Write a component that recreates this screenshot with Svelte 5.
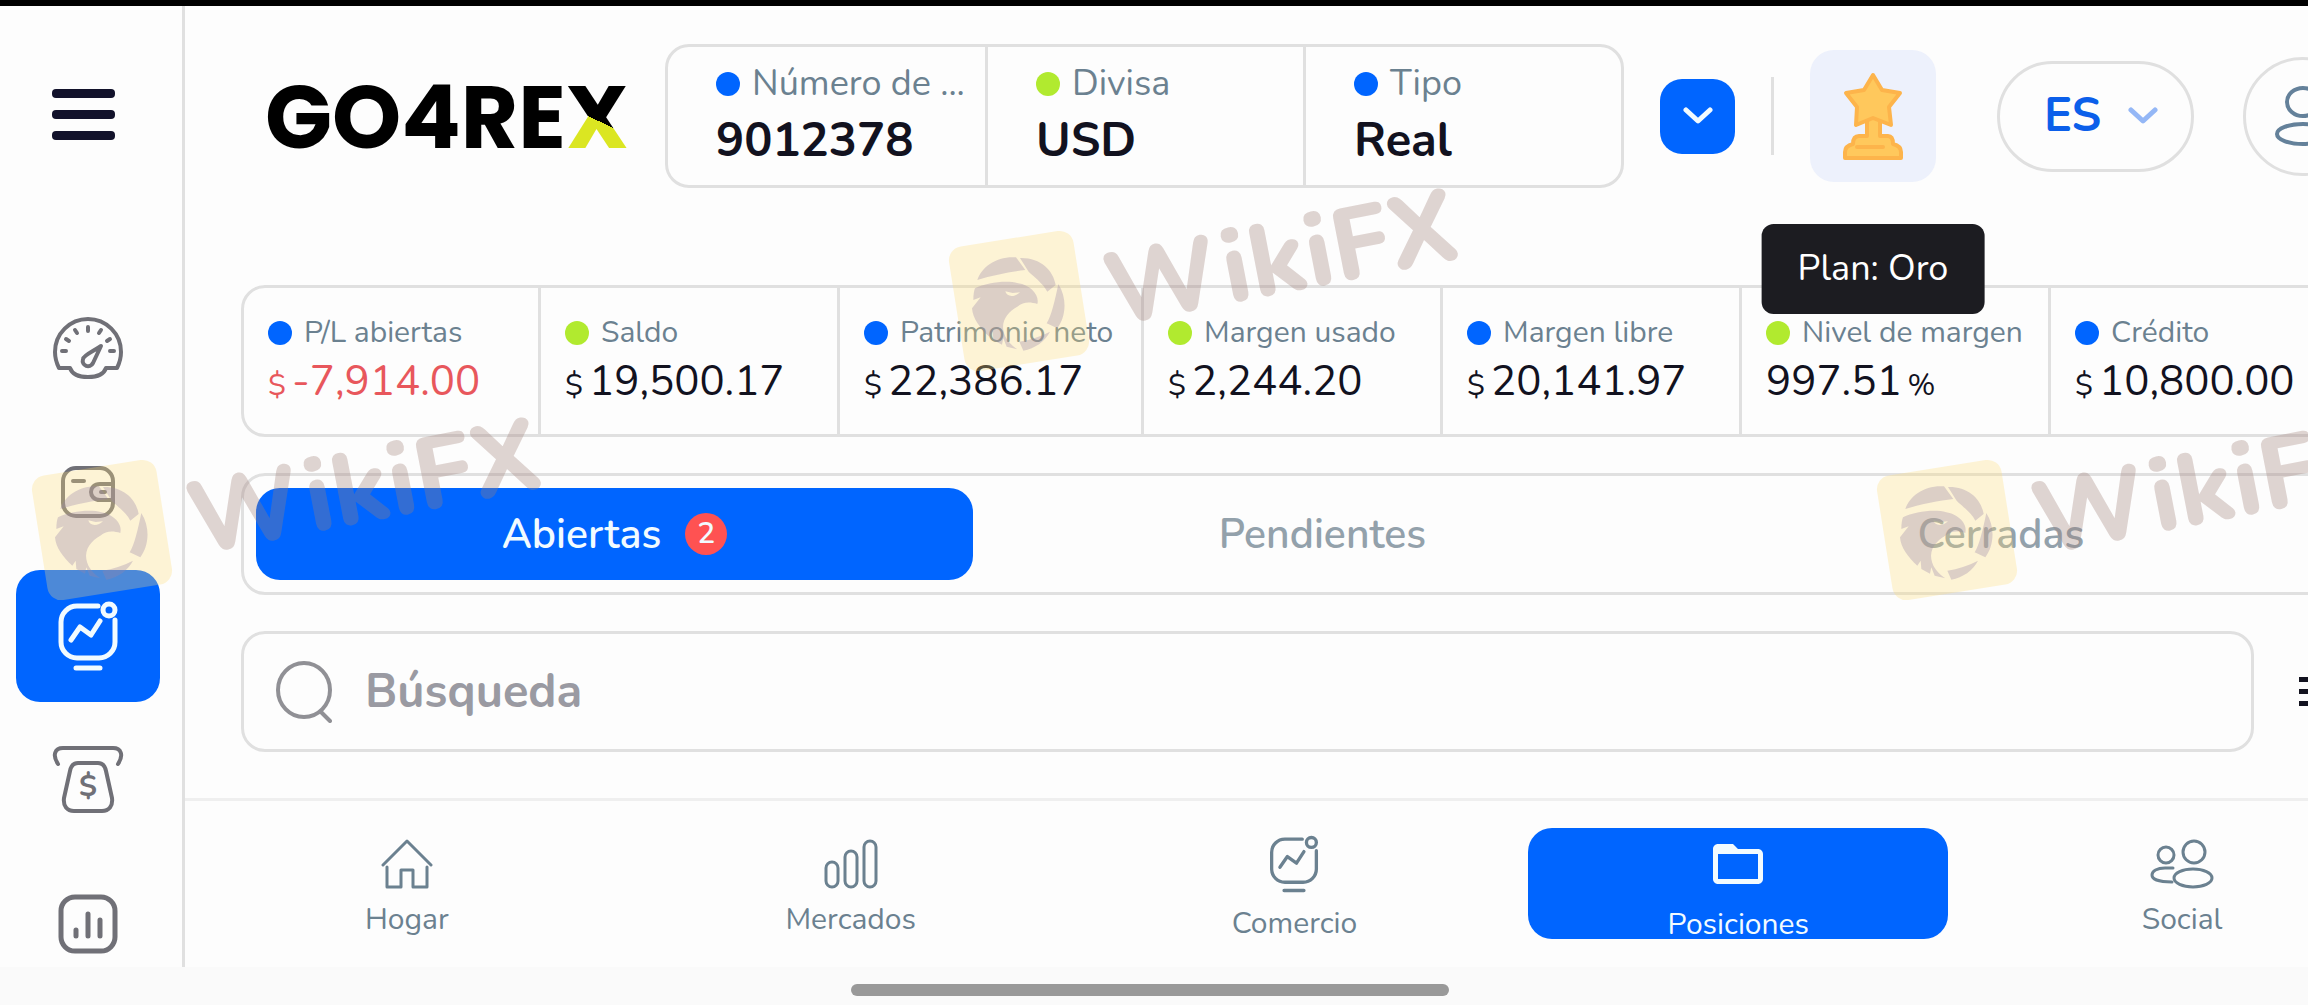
<script>
    const sideLinks = [
        { icon: 'gauge', label: 'Panel' },
        { icon: 'wallet', label: 'Cartera' },
        { icon: 'monitor', label: 'Comercio', active: true },
        { icon: 'cash', label: 'Retirar' },
        { icon: 'chart', label: 'Informes' }
    ];

    const account = [
        { label: 'Número de ...', value: '9012378', color: 'blue' },
        { label: 'Divisa', value: 'USD', color: 'green' },
        { label: 'Tipo', value: 'Real', color: 'blue' }
    ];

    const stats = [
        { label: 'P/L abiertas', value: '-7,914.00', color: 'blue', negative: true },
        { label: 'Saldo', value: '19,500.17', color: 'green' },
        { label: 'Patrimonio neto', value: '22,386.17', color: 'blue' },
        { label: 'Margen usado', value: '2,244.20', color: 'green' },
        { label: 'Margen libre', value: '20,141.97', color: 'blue' },
        { label: 'Nivel de margen', value: '997.51', color: 'green', percent: true },
        { label: 'Crédito', value: '10,800.00', color: 'blue' }
    ];

    const tabs = [
        { id: 'open', label: 'Abiertas', count: 2 },
        { id: 'pending', label: 'Pendientes' },
        { id: 'closed', label: 'Cerradas' }
    ];

    const navLinks = [
        { icon: 'home', label: 'Hogar' },
        { icon: 'bars', label: 'Mercados' },
        { icon: 'monitor', label: 'Comercio' },
        { icon: 'folder', label: 'Posiciones', active: true },
        { icon: 'people', label: 'Social' }
    ];

    const watermarks = [
        { x: 940, y: 180 },
        { x: 23, y: 409 },
        { x: 1868, y: 409 }
    ];

    let currentTab = $state('open');
    let language = $state('ES');
    let search = $state('');
</script>

{#snippet icon(name)}
    {#if name === 'gauge'}
        <svg class="icon" width="70" height="62" viewBox="0 0 70 62" stroke-width="4">
            <path d="M6 51C3 45 2 40 2 35A33 33 0 0 1 68 35C68 40 67 45 64 51H53C51 57 44 60 35 60S19 57 17 51Z" />
            <path d="M9 34h4M13 22l3 2M22 13l2 3M35 10v4M48 13l-2 3M57 22l-3 2M61 34h-4" />
            <path d="M48 29L40 46C37 52 28 49 30 42C31 38 41 34 48 29Z" />
        </svg>
    {:else if name === 'wallet'}
        <svg class="icon" width="54" height="52" viewBox="0 0 54 52" stroke-width="4">
            <rect x="2" y="2" width="50" height="48" rx="13" />
            <path d="M12 15h11M52 18H39C27 18 27 34 39 34H52M40 26h4" />
        </svg>
    {:else if name === 'monitor'}
        <svg class="icon monitor" viewBox="0 0 60 70" stroke-width="5">
            <path d="M40 5H19A16 16 0 0 0 3 21V41A16 16 0 0 0 19 57H41A16 16 0 0 0 57 41V19" />
            <circle cx="51" cy="9" r="6" />
            <path d="M13 39L22 26L33 34L42 20M18 67H42" />
        </svg>
    {:else if name === 'cash'}
        <svg class="icon" width="72" height="68" viewBox="0 0 72 68" stroke-width="4">
            <path d="M6 18C0 9 3 2 11 2H61C69 2 72 9 66 18" />
            <path d="M26 17H46C51 17 53 20 54 25L60 52C61 60 57 65 50 65H22C15 65 11 60 12 52L18 25C19 20 21 17 26 17Z" />
            <text x="36" y="50" text-anchor="middle">$</text>
        </svg>
    {:else if name === 'chart'}
        <svg class="icon" width="60" height="60" viewBox="0 0 60 60" stroke-width="5">
            <rect x="3" y="3" width="54" height="54" rx="14" />
            <path d="M18 36v6M30 20v22M42 26v16" />
        </svg>
    {:else if name === 'home'}
        <svg class="icon" width="52" height="50" viewBox="0 0 52 50" stroke-width="3">
            <path d="M2 26L26 2L50 26" />
            <path d="M6 28V48H20V31H32V48H46V28" />
        </svg>
    {:else if name === 'bars'}
        <svg class="icon" width="54" height="50" viewBox="0 0 54 50" stroke-width="3">
            <rect x="2" y="23" width="12" height="25" rx="6" />
            <rect x="21" y="12" width="12" height="36" rx="6" />
            <rect x="40" y="2" width="12" height="46" rx="6" />
        </svg>
    {:else if name === 'folder'}
        <svg width="50" height="60" viewBox="2 0 20 24" fill="currentColor">
            <path d="M20 6h-8l-2-2H4c-1.1 0-2 .9-2 2v12c0 1.1.9 2 2 2h16c1.1 0 2-.9 2-2V8c0-1.1-.9-2-2-2zm0 12H4V8h16v10z" />
        </svg>
    {:else if name === 'people'}
        <svg class="icon" width="64" height="50" viewBox="0 0 64 50" stroke-width="3">
            <circle cx="44" cy="13" r="11" />
            <ellipse cx="43" cy="39" rx="19" ry="9" />
            <circle cx="16" cy="16" r="8" />
            <path d="M23 29H15C7 29 2 32 2 36S8 43 22 43" />
        </svg>
    {/if}
{/snippet}

{#snippet chevron()}
    <svg class="chevron" width="30" height="18" viewBox="0 0 30 18" stroke-width="5">
        <path d="M3 3L15 14L27 3" />
    </svg>
{/snippet}

<div class="page">
    <div class="shell">
        <aside class="sidebar">
            <button class="menu" aria-label="Menú">
                <span></span>
                <span></span>
                <span></span>
            </button>
            <nav class="side-nav">
                {#each sideLinks as link}
                    <a href="#{link.icon}" class:active={link.active} aria-label={link.label}>
                        {@render icon(link.icon)}
                    </a>
                {/each}
            </nav>
        </aside>

        <main class="main">
            <header class="header">
                <a class="logo" href="#inicio">GO4RE<span>X</span></a>

                <dl class="account">
                    {#each account as item}
                        <div class="account-cell">
                            <dt><i class="dot {item.color}"></i>{item.label}</dt>
                            <dd>{item.value}</dd>
                        </div>
                    {/each}
                </dl>
                <button class="account-toggle" aria-label="Cambiar cuenta">{@render chevron()}</button>

                <div class="divider"></div>

                <div class="plan">
                    <svg width="60" height="88" viewBox="0 0 60 88">
                        <path class="gold" d="M24 46H37V64H45Q50 64 50 72Q58 74 58 80V86H2V80Q2 74 10 72Q10 64 16 64H24Z" />
                        <path class="gold" d="M30 3L39 18L57 21L46 35L48 53L30 46L13 53L14 35L3 21L21 18Z" />
                        <path class="gold-line" d="M14 75H40" />
                    </svg>
                    <div class="tooltip" role="tooltip">Plan: Oro</div>
                </div>

                <div class="language">
                    <select bind:value={language} aria-label="Idioma">
                        <option>ES</option>
                        <option>EN</option>
                    </select>
                    {@render chevron()}
                </div>

                <button class="user" aria-label="Perfil">
                    <svg class="icon" width="56" height="62" viewBox="0 0 56 62" stroke-width="4">
                        <ellipse cx="28" cy="17" rx="16" ry="14" />
                        <ellipse cx="28" cy="49" rx="26" ry="10" />
                    </svg>
                </button>
            </header>

            <dl class="stats">
                {#each stats as item}
                    <div class="stat">
                        <dt><i class="dot {item.color}"></i>{item.label}</dt>
                        <dd class:negative={item.negative}>
                            {#if !item.percent}<small>$</small>{/if}
                            <span>{item.value}</span>
                            {#if item.percent}<small>%</small>{/if}
                        </dd>
                    </div>
                {/each}
            </dl>

            <div class="tabs" role="tablist">
                {#each tabs as tab}
                    <button
                        role="tab"
                        class:active={currentTab === tab.id}
                        aria-selected={currentTab === tab.id}
                        onclick={() => (currentTab = tab.id)}
                    >
                        {tab.label}
                        {#if tab.count}<span class="badge">{tab.count}</span>{/if}
                    </button>
                {/each}
            </div>

            <div class="search-row">
                <label class="search">
                    <svg class="icon" width="56" height="62" viewBox="0 0 56 62" stroke-width="4">
                        <ellipse cx="28" cy="29" rx="26" ry="27" />
                        <path d="M45 51L54 60" />
                    </svg>
                    <input type="text" placeholder="Búsqueda" aria-label="Búsqueda" bind:value={search} />
                </label>
                <button class="filter" aria-label="Filtros">
                    <span></span>
                    <span></span>
                    <span></span>
                </button>
            </div>

            <nav class="bottom-nav">
                {#each navLinks as link}
                    <a href="#{link.label}" class:active={link.active}>
                        {@render icon(link.icon)}
                        <span>{link.label}</span>
                    </a>
                {/each}
            </nav>
        </main>
    </div>

    <div class="gesture-area"><div class="gesture-bar"></div></div>

    {#each watermarks as mark}
        <svg
            class="watermark"
            style="left: {mark.x}px; top: {mark.y}px"
            width="540"
            height="210"
            viewBox="0 0 540 210"
            aria-hidden="true"
        >
            <rect class="mark-tile" x="16" y="58" width="126" height="126" rx="14" transform="rotate(-9 79 121)" />
            <g class="mark-shape" transform="translate(0 40) scale(.3333)">
                <path d="M112 180C125 140 170 108 228 112L256 150C215 155 160 165 112 180Z" />
                <path d="M240 114C300 112 340 150 347 195L322 215C310 190 275 165 266 155Z" />
                <path d="M355 192C385 240 375 295 352 325L320 310C335 285 345 240 355 192Z" />
                <path d="M330 335C315 365 285 385 250 392L238 365C270 360 300 350 330 335Z" />
                <path fill-rule="evenodd" d="M105 205C140 188 200 180 235 190C270 195 300 225 292 252C270 245 250 245 232 260C205 275 185 300 190 330C195 360 215 375 232 388L200 380L190 355L186 374L160 360L158 335L148 350C120 325 98 295 96 265L122 232L100 240C100 225 102 212 105 205ZM196 214C200 232 225 232 240 217L218 219Z" />
            </g>
            <text class="mark-shape" transform="translate(172 146) rotate(-11)">WikiFX</text>
        </svg>
    {/each}
</div>

<style>
    :global(body) {
        margin: 0;
        overflow: hidden;
    }

    .page {
        --blue: #0065ff;
        --green: #b1ea2f;
        --line: #e0e0e0;
        --slate: #6b8190;
        --ink: #12121f;
        position: relative;
        display: flex;
        flex-direction: column;
        height: 100vh;
        overflow: hidden;
        box-sizing: border-box;
        border-top: 6px solid #000;
        background: #fafafa;
        color: var(--ink);
        font-family: Nunito, Lato, "Open Sans", sans-serif;
    }

    button,
    select,
    input {
        margin: 0;
        padding: 0;
        border: 0;
        background: none;
        color: inherit;
        font: inherit;
    }

    button,
    a {
        cursor: pointer;
        text-decoration: none;
    }

    dl,
    dd {
        margin: 0;
    }

    .icon,
    .chevron {
        flex: none;
        fill: none;
        stroke: currentColor;
        stroke-linecap: round;
        stroke-linejoin: round;
    }

    .icon text {
        fill: currentColor;
        stroke: none;
        font-size: 30px;
        font-weight: 700;
    }

    .shell {
        display: flex;
        flex: 1;
        min-height: 0;
        overflow: hidden;
        background: #fdfdfd;
    }

    /* sidebar */
    .sidebar {
        flex: none;
        width: 182px;
        border-right: 3px solid var(--line);
    }

    .menu {
        display: flex;
        flex-direction: column;
        gap: 12px;
        margin: 83px 0 0 52px;
    }

    .menu span {
        width: 63px;
        height: 9px;
        border-radius: 4px;
        background: #12122b;
    }

    .side-nav {
        display: flex;
        flex-direction: column;
        gap: 12px;
        padding: 142px 22px 0 16px;
    }

    .side-nav a {
        display: flex;
        flex: none;
        align-items: center;
        justify-content: center;
        height: 132px;
        border-radius: 24px;
        color: #707077;
    }

    .side-nav a.active {
        background: var(--blue);
        color: #f2fbff;
    }

    .side-nav .monitor {
        width: 60px;
        height: 70px;
    }

    /* header */
    .main {
        display: flex;
        flex: 1;
        flex-direction: column;
        min-width: 0;
        padding: 38px 0 0 56px;
    }

    .header {
        display: flex;
        align-items: center;
        height: 144px;
        margin-bottom: 97px;
    }

    .header > * {
        flex: none;
        box-sizing: border-box;
    }

    .logo {
        width: 424px;
        padding: 4px 0 0 24px;
        color: #000;
        font-family: Poppins, Inter, sans-serif;
        font-size: 88px;
        font-weight: 700;
        line-height: 96px;
    }

    .logo span {
        background: linear-gradient(205deg, #000 52%, #dbe622 52%);
        background-clip: text;
        color: transparent;
    }

    .account {
        display: grid;
        grid-template-columns: 317px 318px 1fr;
        width: 959px;
        height: 144px;
        border: 3px solid var(--line);
        border-radius: 24px;
    }

    .account-cell {
        padding: 12px 0 0 48px;
        border-left: 3px solid var(--line);
        white-space: nowrap;
    }

    .account-cell:first-child,
    .stat:first-child {
        border-left: 0;
    }

    dt {
        display: flex;
        align-items: center;
        gap: 12px;
        color: var(--slate);
        white-space: nowrap;
    }

    .dot {
        flex: none;
        width: 24px;
        height: 24px;
        border-radius: 50%;
    }

    .blue {
        background: var(--blue);
    }

    .green {
        background: var(--green);
    }

    .account-cell dt {
        font-size: 36px;
        line-height: 50px;
    }

    .account-cell dd {
        font-size: 47px;
        font-weight: 700;
        line-height: 64px;
    }

    .account-toggle {
        display: flex;
        align-items: center;
        justify-content: center;
        width: 75px;
        height: 75px;
        margin-left: 36px;
        border-radius: 22px;
        background: var(--blue);
        color: #f2fbff;
    }

    .divider {
        width: 3px;
        height: 78px;
        margin: 0 36px;
        background: var(--line);
    }

    .plan {
        position: relative;
        display: flex;
        align-items: center;
        justify-content: center;
        width: 126px;
        height: 132px;
        border-radius: 24px;
        background: #edf1fc;
    }

    .gold {
        fill: #ffc85c;
        stroke: #fdb44b;
        stroke-width: 4;
        stroke-linejoin: round;
    }

    .gold-line {
        stroke: #fdb44b;
        stroke-width: 4;
        stroke-linecap: round;
    }

    .tooltip {
        position: absolute;
        top: calc(100% + 42px);
        left: 50%;
        z-index: 2;
        padding: 0 36px;
        border-radius: 12px;
        background: #1c1c21;
        color: #fff;
        font-size: 36px;
        line-height: 90px;
        white-space: nowrap;
        transform: translateX(-50%);
    }

    .language {
        display: flex;
        align-items: center;
        gap: 20px;
        width: 197px;
        height: 111px;
        margin: 0 49px 0 61px;
        padding-left: 44px;
        border: 3px solid var(--line);
        border-radius: 56px;
        color: #94b7f6;
    }

    .language select {
        appearance: none;
        color: #0b5fea;
        font-size: 47px;
        font-weight: 700;
        line-height: 64px;
    }

    .user {
        display: flex;
        align-items: center;
        justify-content: center;
        width: 119px;
        height: 119px;
        border: 3px solid var(--line);
        border-radius: 50%;
        color: #64819a;
    }

    /* account figures */
    .stats {
        display: grid;
        grid-template-columns: 294px 299px 304px 299px 299px 309px 1fr;
        height: 146px;
        margin: 0 -60px 36px 0;
        border: 3px solid var(--line);
        border-radius: 24px;
    }

    .stat {
        padding: 24px 0 0 24px;
        border-left: 3px solid var(--line);
    }

    .stat dt {
        font-size: 30px;
        line-height: 42px;
    }

    .stat dd {
        display: flex;
        align-items: baseline;
        gap: 6px;
        font-size: 42px;
        line-height: 56px;
    }

    .stat small {
        font-size: 30px;
    }

    .stat .negative {
        color: #e8575c;
    }

    /* tabs */
    .tabs {
        display: flex;
        margin: 0 -37px 36px 0;
        padding: 12px;
        border: 3px solid var(--line);
        border-radius: 24px;
    }

    .tabs button {
        display: flex;
        flex: 1 1 auto;
        align-items: center;
        justify-content: center;
        gap: 24px;
        height: 92px;
        border-radius: 24px;
        color: #93a1ab;
        font-size: 41px;
        font-weight: 600;
    }

    .tabs button.active {
        background: var(--blue);
        color: #f2fbff;
    }

    .badge {
        width: 42px;
        border-radius: 21px;
        background: #ff5252;
        font-size: 30px;
        line-height: 42px;
    }

    /* search */
    .search-row {
        display: flex;
        align-items: center;
        gap: 45px;
        margin: 0 -37px 46px 0;
    }

    .search {
        display: flex;
        flex: 1;
        align-items: center;
        gap: 33px;
        height: 115px;
        padding: 0 32px;
        border: 3px solid var(--line);
        border-radius: 24px;
        color: #909095;
    }

    .search input {
        flex: 1;
        min-width: 0;
        color: var(--ink);
        font-size: 47px;
        font-weight: 700;
        line-height: 64px;
        outline: none;
    }

    .search input::placeholder {
        color: #9a9aa2;
        opacity: 1;
    }

    .filter {
        display: flex;
        flex-direction: column;
        gap: 7px;
    }

    .filter span {
        width: 46px;
        height: 5px;
        background: var(--ink);
    }

    /* bottom navigation */
    .bottom-nav {
        display: grid;
        grid-template-columns: repeat(5, 1fr);
        gap: 24px;
        margin: auto -84px 0 -56px;
        padding: 27px 0 28px 12px;
        border-top: 3px solid #efefef;
    }

    .bottom-nav a {
        display: flex;
        flex-direction: column;
        align-items: center;
        justify-content: center;
        gap: 10px;
        height: 100px;
        padding-top: 11px;
        border-radius: 24px;
        color: var(--slate);
        font-size: 30px;
        line-height: 41px;
    }

    .bottom-nav svg {
        flex: none;
    }

    .bottom-nav .monitor {
        width: 50px;
        height: 58px;
        stroke-width: 4px;
    }

    .bottom-nav a.active {
        background: var(--blue);
        color: #f2fbff;
    }

    .gesture-area {
        display: flex;
        align-items: center;
        justify-content: center;
        box-sizing: border-box;
        height: 38px;
        padding: 8px 8px 0 0;
    }

    .gesture-bar {
        width: 26%;
        height: 12px;
        border-radius: 6px;
        background: #999;
    }

    .watermark {
        position: absolute;
        margin-top: -6px;
        overflow: visible;
        pointer-events: none;
    }

    .mark-tile {
        fill: #ffdf7a;
        opacity: 0.3;
    }

    .mark-shape {
        fill: #a08078;
        opacity: 0.32;
        font-size: 102px;
        font-weight: 800;
    }

    g.mark-shape {
        fill: #9a85a8;
    }
</style>
